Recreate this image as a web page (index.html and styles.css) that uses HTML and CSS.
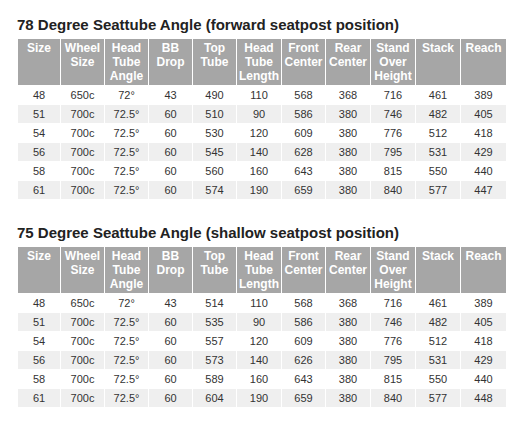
FILE: index.html
```html
<!DOCTYPE html>
<html>
<head>
<meta charset="utf-8">
<link rel="stylesheet" href="styles.css">
</head>
<body>
<section class="geo">
  <h2 class="geo-title">78 Degree Seattube Angle (forward seatpost position)</h2>
  <table class="geo-table">
    <colgroup>
      <col class="c1"><col class="c2"><col class="c2"><col class="c2"><col class="c2"><col class="c3"><col class="c2"><col class="c3"><col class="c3"><col class="c3"><col class="c4">
    </colgroup>
    <thead>
      <tr><th>Size</th><th>Wheel Size</th><th>Head Tube Angle</th><th>BB Drop</th><th>Top Tube</th><th>Head Tube Length</th><th>Front Center</th><th>Rear Center</th><th>Stand Over Height</th><th>Stack</th><th>Reach</th></tr>
    </thead>
    <tbody>
      <tr><td>48</td><td>650c</td><td>72°</td><td>43</td><td>490</td><td>110</td><td>568</td><td>368</td><td>716</td><td>461</td><td>389</td></tr>
      <tr><td>51</td><td>700c</td><td>72.5°</td><td>60</td><td>510</td><td>90</td><td>586</td><td>380</td><td>746</td><td>482</td><td>405</td></tr>
      <tr><td>54</td><td>700c</td><td>72.5°</td><td>60</td><td>530</td><td>120</td><td>609</td><td>380</td><td>776</td><td>512</td><td>418</td></tr>
      <tr><td>56</td><td>700c</td><td>72.5°</td><td>60</td><td>545</td><td>140</td><td>628</td><td>380</td><td>795</td><td>531</td><td>429</td></tr>
      <tr><td>58</td><td>700c</td><td>72.5°</td><td>60</td><td>560</td><td>160</td><td>643</td><td>380</td><td>815</td><td>550</td><td>440</td></tr>
      <tr><td>61</td><td>700c</td><td>72.5°</td><td>60</td><td>574</td><td>190</td><td>659</td><td>380</td><td>840</td><td>577</td><td>447</td></tr>
    </tbody>
  </table>
</section>
<section class="geo">
  <h2 class="geo-title">75 Degree Seattube Angle (shallow seatpost position)</h2>
  <table class="geo-table">
    <colgroup>
      <col class="c1"><col class="c2"><col class="c2"><col class="c2"><col class="c2"><col class="c3"><col class="c2"><col class="c3"><col class="c3"><col class="c3"><col class="c4">
    </colgroup>
    <thead>
      <tr><th>Size</th><th>Wheel Size</th><th>Head Tube Angle</th><th>BB Drop</th><th>Top Tube</th><th>Head Tube Length</th><th>Front Center</th><th>Rear Center</th><th>Stand Over Height</th><th>Stack</th><th>Reach</th></tr>
    </thead>
    <tbody>
      <tr><td>48</td><td>650c</td><td>72°</td><td>43</td><td>514</td><td>110</td><td>568</td><td>368</td><td>716</td><td>461</td><td>389</td></tr>
      <tr><td>51</td><td>700c</td><td>72.5°</td><td>60</td><td>535</td><td>90</td><td>586</td><td>380</td><td>746</td><td>482</td><td>405</td></tr>
      <tr><td>54</td><td>700c</td><td>72.5°</td><td>60</td><td>557</td><td>120</td><td>609</td><td>380</td><td>776</td><td>512</td><td>418</td></tr>
      <tr><td>56</td><td>700c</td><td>72.5°</td><td>60</td><td>573</td><td>140</td><td>626</td><td>380</td><td>795</td><td>531</td><td>429</td></tr>
      <tr><td>58</td><td>700c</td><td>72.5°</td><td>60</td><td>589</td><td>160</td><td>643</td><td>380</td><td>815</td><td>550</td><td>440</td></tr>
      <tr><td>61</td><td>700c</td><td>72.5°</td><td>60</td><td>604</td><td>190</td><td>659</td><td>380</td><td>840</td><td>577</td><td>448</td></tr>
    </tbody>
  </table>
</section>
</body>
</html>
```
FILE: styles.css
```css
html, body {
  margin: 0;
  padding: 0;
  background: #ffffff;
}
body {
  padding: 16px 0 0 17px;
  font-family: "Liberation Sans", Arial, sans-serif;
  color: #333333;
}
.geo {
  margin-bottom: 24px;
}
.geo-title {
  margin: 0 0 4px 0;
  font-size: 15px;
  line-height: 18px;
  font-weight: bold;
  color: #222222;
}
.geo-table {
  border-collapse: separate;
  border-spacing: 1px;
  table-layout: fixed;
  width: 489px;
}
.geo-table col.c1 { width: 42px; }
.geo-table col.c2 { width: 43px; }
.geo-table col.c3 { width: 44px; }
.geo-table col.c4 { width: 45px; }
.geo-table th {
  background: #a6a6a6;
  color: #ffffff;
  font-size: 12px;
  line-height: 14px;
  font-weight: bold;
  text-align: center;
  vertical-align: top;
  padding: 2px 0 2px 0;
}
.geo-table td {
  height: 18px;
  padding: 0;
  font-size: 11px;
  line-height: 18px;
  text-align: center;
  vertical-align: middle;
  color: #333333;
}
.geo-table tbody tr:nth-child(even) td {
  background: #efefef;
}
```
